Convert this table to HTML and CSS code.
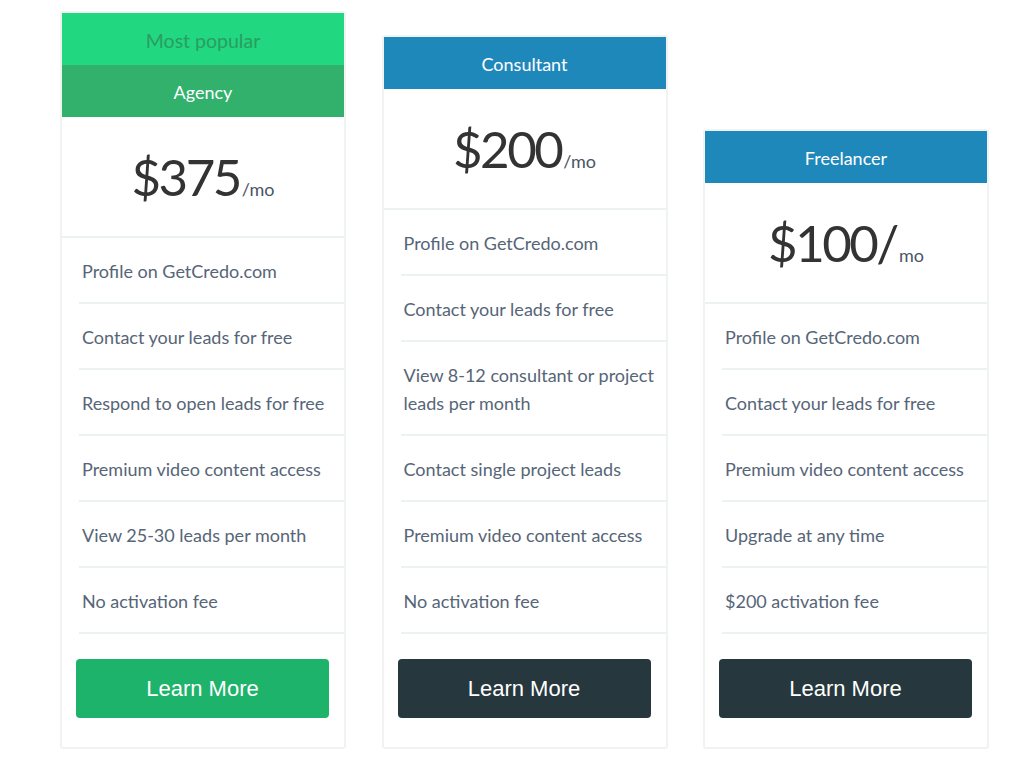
FILE: index.html
```html
<!DOCTYPE html>
<html lang="en">
<head>
<meta charset="utf-8">
<title>Pricing</title>
<link rel="stylesheet" href="styles.css">
</head>
<body>
<div class="plans">
  <div class="card">
    <div class="ribbon">Most popular</div>
    <div class="title title-green">Agency</div>
    <div class="price"><span class="amount">$375</span><span class="per">/mo</span></div>
    <ul class="features">
      <li>Profile on GetCredo.com</li>
      <li>Contact your leads for free</li>
      <li>Respond to open leads for free</li>
      <li>Premium video content access</li>
      <li>View 25-30 leads per month</li>
      <li>No activation fee</li>
    </ul>
    <div class="action"><a class="btn btn-green" href="#">Learn More</a></div>
  </div>
  <div class="card">
    <div class="title title-blue">Consultant</div>
    <div class="price"><span class="amount">$200</span><span class="per">/mo</span></div>
    <ul class="features">
      <li>Profile on GetCredo.com</li>
      <li>Contact your leads for free</li>
      <li>View 8-12 consultant or project leads per month</li>
      <li>Contact single project leads</li>
      <li>Premium video content access</li>
      <li>No activation fee</li>
    </ul>
    <div class="action"><a class="btn btn-dark" href="#">Learn More</a></div>
  </div>
  <div class="card">
    <div class="title title-blue">Freelancer</div>
    <div class="price"><span class="amount">$100/</span><span class="per">mo</span></div>
    <ul class="features">
      <li>Profile on GetCredo.com</li>
      <li>Contact your leads for free</li>
      <li>Premium video content access</li>
      <li>Upgrade at any time</li>
      <li>$200 activation fee</li>
    </ul>
    <div class="action"><a class="btn btn-dark" href="#">Learn More</a></div>
  </div>
</div>
</body>
</html>
```

FILE: styles.css
```css
* { box-sizing: border-box; }

body {
  margin: 0;
  background: #ffffff;
  font-family: "Lato", "Open Sans", "Noto Sans", sans-serif;
  color: #333333;
}

.plans {
  display: flex;
  align-items: flex-end;
  gap: 35.5px;
  min-height: 770px;
  padding: 0 0 21px 60px;
}

.card {
  width: 286px;
  border: 2px solid #f1f2f2;
  border-radius: 3px;
  background: #ffffff;
}

.ribbon {
  height: 52px;
  display: flex;
  align-items: center;
  justify-content: center;
  padding-top: 2px;
  background: #21d77f;
  color: #2a9d60;
  font-size: 19.5px;
}

.title {
  height: 52px;
  display: flex;
  align-items: center;
  justify-content: center;
  padding-top: 2px;
  color: #ffffff;
  font-size: 18px;
}

.title-green { background: #31b16c; }
.title-blue { background: #1f88bb; }

.price {
  height: 121px;
  border-bottom: 2px solid #ecf2f2;
  display: flex;
  align-items: baseline;
  justify-content: center;
  padding-top: 29px;
}

.amount {
  font-size: 51px;
  font-weight: 400;
  color: #333333;
  letter-spacing: -2.5px;
}

.per {
  font-size: 18px;
  color: #4a5566;
  margin-left: 2px;
}

.features {
  list-style: none;
  margin: 0 0 0 17px;
  padding: 0;
}

.features li {
  padding: 19px 8px 17px 3px;
  line-height: 28px;
  border-bottom: 2px solid #ecf2f2;
  font-size: 18px;
  color: #566577;
}

.action {
  padding: 25px 15px 29px 14px;
}

.btn {
  display: flex;
  align-items: center;
  justify-content: center;
  height: 59px;
  border-radius: 4px;
  color: #ffffff;
  text-decoration: none;
  font-family: "Liberation Sans", Arial, sans-serif;
  font-size: 22px;
}

.btn-green { background: #1db36a; }
.btn-dark { background: #26383d; }
```
